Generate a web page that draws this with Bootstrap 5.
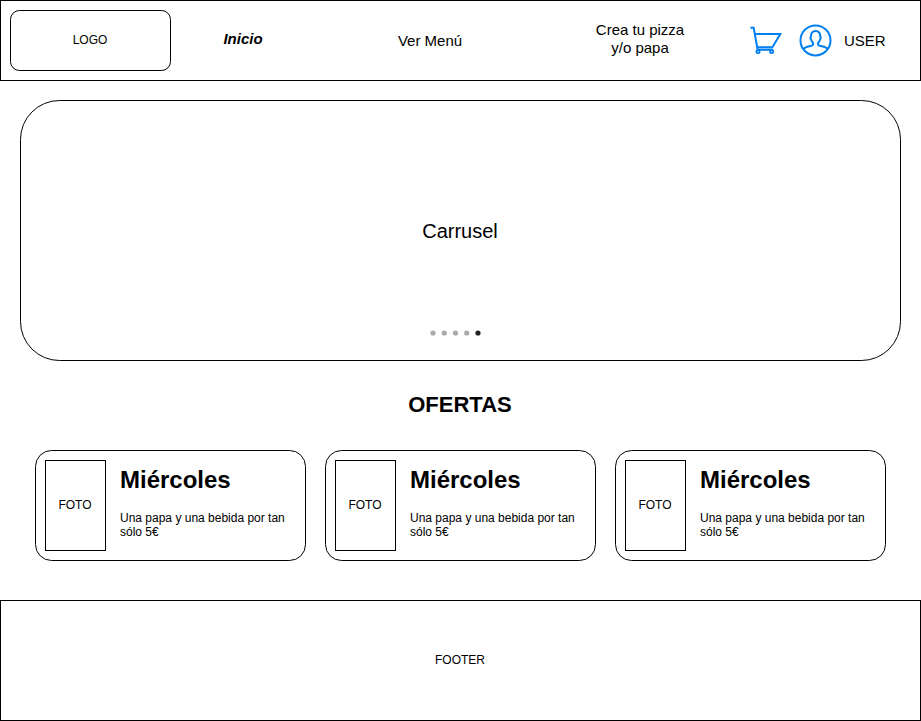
<!DOCTYPE html>
<html lang="es">
<head>
<meta charset="utf-8">
<meta name="viewport" content="width=device-width, initial-scale=1">
<title>Inicio</title>
<link href="https://cdn.jsdelivr.net/npm/bootstrap@5.3.0/dist/css/bootstrap.min.css" rel="stylesheet">
<style>
  body { font-family: "Liberation Sans", Arial, sans-serif; font-size: 12px; line-height: 14px; color: #000; background: #fff; }
  .outline { border: 1px solid #000; }
  .placeholder-box { padding: 0 1px 2px 0; }
  .site-header { height: 81px; padding-left: 9px; }
  .logo-box { width: 161px; height: 61px; border-radius: 9.5px; }
  .site-header .nav-link { font-size: 15px; line-height: 18px; color: #000; padding: 0; text-align: center; }
  .link-home { width: 144px; font-weight: 700; font-style: italic; padding-bottom: 4px !important; }
  .link-menu { width: 230px; }
  .link-create { width: 190px; padding-bottom: 3px !important; }
  .user-tools { padding-left: 13px; }
  .icon-user { margin-left: 14px; }
  .user-name { font-size: 15px; line-height: 18px; margin-left: 11px; }
  .hero { height: 261px; margin: 19px 20px 0; border-radius: 39.5px; padding-bottom: 24px; }
  .hero-title { font-size: 20px; line-height: 24px; margin-top: 118px; padding-right: 1px; }
  .dots { margin-right: 9px; }
  .offers-title { font-size: 22px; line-height: 26px; font-weight: 700; margin: 31px 0 32px; padding-right: 1px; }
  .offers { gap: 19px; padding: 0 35px; }
  .offer { width: 271px; height: 111px; border-radius: 16.5px; padding: 9px; }
  .photo { width: 61px; height: 91px; }
  .offer-text { padding: 6px 0 0 14px; }
  .offer-text h2 { font-size: 24px; line-height: 28px; font-weight: 700; margin: 0 0 17px; }
  .site-footer { height: 121px; margin-top: 39px; }
</style>
</head>
<body>
<header class="site-header outline d-flex align-items-center">
  <div class="logo-box placeholder-box outline d-flex align-items-center justify-content-center flex-shrink-0">LOGO</div>
  <nav class="d-flex align-items-center">
    <a class="nav-link link-home" href="#">Inicio</a>
    <a class="nav-link link-menu" href="#">Ver Menú</a>
    <a class="nav-link link-create" href="#">Crea tu pizza<br>y/o papa</a>
  </nav>
  <div class="user-tools d-flex align-items-center">
    <svg width="36" height="37" viewBox="748 22 36 37" fill="none" stroke="#0080f0" stroke-width="2">
      <path d="M750.4 27.7H753.7L757.6 49.5M754.9 33.9H780.3L772.4 47.2H757.4M757 49.8H773"/>
      <circle cx="758" cy="51.6" r="1.6" stroke-width="1.8"/>
      <circle cx="771.6" cy="51.6" r="1.6" stroke-width="1.8"/>
    </svg>
    <svg class="icon-user" width="35" height="37" viewBox="798 22 35 37" fill="none" stroke="#0080f0" stroke-width="2">
      <circle cx="815.5" cy="40.4" r="15"/>
      <path d="M803.3 49.2C805 47.2 807.6 46.4 810.6 46C812.6 45.7 813.5 44.8 813.1 43C811.8 41.6 811.4 40.4 811 39.2C810.1 38.4 810.4 37 811 36.6C810.7 33.2 812.4 31 815.6 31S820.5 33.2 820.2 36.6C820.8 37 821.1 38.4 820.2 39.2C819.8 40.4 819.4 41.6 818.1 43C817.7 44.8 818.6 45.7 820.6 46C823.6 46.4 826.2 47.2 827.9 49.2"/>
    </svg>
    <span class="user-name">USER</span>
  </div>
</header>
<main>
  <section class="hero outline d-flex flex-column align-items-center justify-content-between">
    <div class="hero-title">Carrusel</div>
    <svg class="dots" width="52" height="6" viewBox="430 330 52 6" fill="#aaa">
      <circle cx="433" cy="333" r="2.6"/><circle cx="444.3" cy="333" r="2.6"/><circle cx="455.5" cy="333" r="2.6"/><circle cx="466.7" cy="333" r="2.6"/><circle cx="478" cy="333" r="2.6" fill="#222"/>
    </svg>
  </section>
  <h1 class="offers-title text-center">OFERTAS</h1>
  <section class="offers d-flex">
    <article class="offer outline d-flex">
      <div class="photo placeholder-box outline d-flex align-items-center justify-content-center flex-shrink-0">FOTO</div>
      <div class="offer-text"><h2>Miércoles</h2><p class="mb-0">Una papa y una bebida por tan sólo 5€</p></div>
    </article>
    <article class="offer outline d-flex">
      <div class="photo placeholder-box outline d-flex align-items-center justify-content-center flex-shrink-0">FOTO</div>
      <div class="offer-text"><h2>Miércoles</h2><p class="mb-0">Una papa y una bebida por tan sólo 5€</p></div>
    </article>
    <article class="offer outline d-flex">
      <div class="photo placeholder-box outline d-flex align-items-center justify-content-center flex-shrink-0">FOTO</div>
      <div class="offer-text"><h2>Miércoles</h2><p class="mb-0">Una papa y una bebida por tan sólo 5€</p></div>
    </article>
  </section>
</main>
<footer class="site-footer placeholder-box outline d-flex align-items-center justify-content-center">FOOTER</footer>
<script src="https://cdn.jsdelivr.net/npm/bootstrap@5.3.0/dist/js/bootstrap.bundle.min.js"></script>
</body>
</html>
